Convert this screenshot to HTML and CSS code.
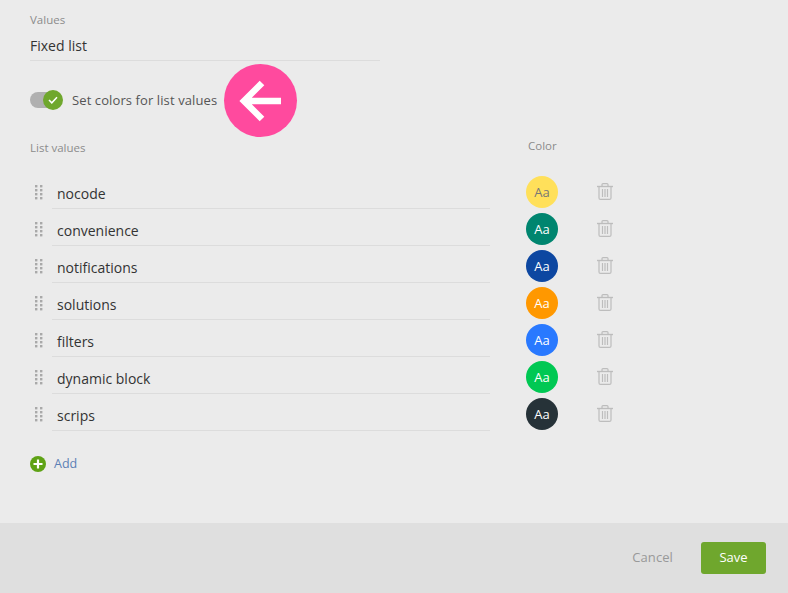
FILE: index.html
```html
<!DOCTYPE html>
<html lang="en">
<head>
    <meta charset="UTF-8">
    <meta name="viewport" content="width=device-width, initial-scale=1.0">
    <title>List values</title>
    <link rel="stylesheet" href="styles.css">
</head>
<body>
    <svg class="icon-defs" width="0" height="0">
        <symbol id="grip" viewBox="0 0 8 15">
            <g fill="#a9a9a9">
                <rect x="0" y="0" width="2.4" height="2.4"/><rect x="5" y="0" width="2.4" height="2.4"/>
                <rect x="0" y="4" width="2.4" height="2.4"/><rect x="5" y="4" width="2.4" height="2.4"/>
                <rect x="0" y="8" width="2.4" height="2.4"/><rect x="5" y="8" width="2.4" height="2.4"/>
                <rect x="0" y="12" width="2.4" height="2.4"/><rect x="5" y="12" width="2.4" height="2.4"/>
            </g>
        </symbol>
        <symbol id="trash" viewBox="0 0 16 17">
            <g fill="none" stroke="#bdbdbd" stroke-width="1.2">
                <path d="M0 3.5h16" stroke-width="1.4"/>
                <path d="M5 3.2V1.6q0-1 1-1h4q1 0 1 1v1.6"/>
                <path d="M2 3.5v11.4q0 1.5 1.5 1.5h9q1.500 0 1.500-1.500V3.500"/>
                <path d="M5.500 6v8M8 6v8M10.500 6v8"/>
            </g>
        </symbol>
    </svg>

    <main class="content">
        <div class="values-field">
            <div class="field-label">Values</div>
            <div class="values-input">Fixed list</div>
        </div>

        <div class="color-toggle">
            <div class="toggle">
                <span class="toggle-knob">
                    <svg width="10" height="8" viewBox="0 0 10 8"><path d="M1 4l2.800 2.800L9 1.200" fill="none" stroke="#fff" stroke-width="1.500"/></svg>
                </span>
            </div>
            <span class="toggle-label">Set colors for list values</span>
            <div class="arrow-badge">
                <svg width="44" height="42" viewBox="0 0 44 42"><path d="M42 21H6M23 3L5 21l18 18" fill="none" stroke="#fff" stroke-width="6.500"/></svg>
            </div>
        </div>

        <div class="list-head">
            <div class="list-head-name field-label">List values</div>
            <div class="field-label">Color</div>
        </div>

        <ul class="value-list">
            <li class="value-row">
                <svg class="grip"><use href="#grip"/></svg>
                <div class="value-name">nocode</div>
                <div class="swatch swatch-yellow">Aa</div>
                <svg class="trash"><use href="#trash"/></svg>
            </li>
            <li class="value-row">
                <svg class="grip"><use href="#grip"/></svg>
                <div class="value-name">convenience</div>
                <div class="swatch swatch-teal">Aa</div>
                <svg class="trash"><use href="#trash"/></svg>
            </li>
            <li class="value-row">
                <svg class="grip"><use href="#grip"/></svg>
                <div class="value-name">notifications</div>
                <div class="swatch swatch-navy">Aa</div>
                <svg class="trash"><use href="#trash"/></svg>
            </li>
            <li class="value-row">
                <svg class="grip"><use href="#grip"/></svg>
                <div class="value-name">solutions</div>
                <div class="swatch swatch-orange">Aa</div>
                <svg class="trash"><use href="#trash"/></svg>
            </li>
            <li class="value-row">
                <svg class="grip"><use href="#grip"/></svg>
                <div class="value-name">filters</div>
                <div class="swatch swatch-blue">Aa</div>
                <svg class="trash"><use href="#trash"/></svg>
            </li>
            <li class="value-row">
                <svg class="grip"><use href="#grip"/></svg>
                <div class="value-name">dynamic block</div>
                <div class="swatch swatch-green">Aa</div>
                <svg class="trash"><use href="#trash"/></svg>
            </li>
            <li class="value-row">
                <svg class="grip"><use href="#grip"/></svg>
                <div class="value-name">scrips</div>
                <div class="swatch swatch-dark">Aa</div>
                <svg class="trash"><use href="#trash"/></svg>
            </li>
        </ul>

        <div class="add-row">
            <svg width="16" height="16" viewBox="0 0 16 16"><circle cx="8" cy="8" r="8" fill="#5ea215"/><path d="M8 3.500v9M3.500 8h9" stroke="#fff" stroke-width="2.200"/></svg>
            <span class="add-label">Add</span>
        </div>
    </main>

    <footer class="footer">
        <span class="cancel-button">Cancel</span>
        <span class="save-button">Save</span>
    </footer>
</body>
</html>
```

FILE: styles.css
```css
body {
    display: flex;
    flex-direction: column;
    height: 593px;
    margin: 0;
    overflow: hidden;
    font-family: "Open Sans", "Noto Sans", sans-serif;
    font-size: 14px;
    background-color: #ebebeb;
    color: #333;
}

.icon-defs {
    position: absolute;
}

.content {
    flex: 1;
    padding: 12px 0 0 30px;
}

.field-label {
    font-size: 11.5px;
    line-height: 16px;
    color: #8c8c8c;
}

.values-input {
    width: 350px;
    height: 31px;
    line-height: 33px;
    margin-top: 1px;
    font-size: 14px;
    color: #333;
    border-bottom: 1px solid #dcdcdc;
}

.color-toggle {
    position: relative;
    display: flex;
    align-items: center;
    height: 20px;
    margin-top: 29px;
}

.toggle {
    position: relative;
    width: 32px;
    height: 16px;
    border-radius: 8px;
    background-color: #b0b0b0;
}

.toggle-knob {
    position: absolute;
    top: -2px;
    right: -1px;
    display: flex;
    justify-content: center;
    align-items: center;
    width: 20px;
    height: 20px;
    border-radius: 50%;
    background-color: #6fa72d;
}

.toggle-label {
    margin-left: 10px;
    font-size: 13px;
    letter-spacing: 0.1px;
    color: #555;
}

.arrow-badge {
    position: absolute;
    top: -26px;
    left: 194px;
    display: flex;
    justify-content: center;
    align-items: center;
    width: 73px;
    height: 73px;
    border-radius: 50%;
    background-color: #ff4a9e;
}

.list-head {
    display: flex;
    margin-top: 28px;
    align-items: flex-start;
}

.list-head-name {
    width: 498px;
    padding-top: 2px;
}

.value-list {
    list-style: none;
    margin: 21px 0 0;
    padding: 0;
}

.value-row {
    display: flex;
    align-items: flex-start;
    height: 37px;
}

.grip {
    flex: none;
    width: 8px;
    height: 15px;
    margin: 8px 0 0 5px;
}

.value-name {
    width: 433px;
    height: 31px;
    margin-left: 9px;
    padding-left: 5px;
    line-height: 33px;
    font-size: 14px;
    color: #333;
    border-bottom: 1px solid #dcdcdc;
}

.swatch {
    flex: none;
    width: 32px;
    height: 32px;
    margin: -1px 0 0 36px;
    border-radius: 50%;
    text-align: center;
    line-height: 32px;
    font-size: 13px;
    color: #fff;
}

.trash {
    flex: none;
    width: 16px;
    height: 17px;
    margin: 6px 0 0 39px;
}

.swatch-yellow {
    background-color: #ffe05a;
    color: #777;
}

.swatch-teal {
    background-color: #00856f;
}

.swatch-navy {
    background-color: #0d47a1;
}

.swatch-orange {
    background-color: #ff9800;
}

.swatch-blue {
    background-color: #2979ff;
}

.swatch-green {
    background-color: #00c853;
}

.swatch-dark {
    background-color: #263238;
}

.add-row {
    display: flex;
    align-items: center;
    margin-top: 19px;
}

.add-label {
    margin-left: 8px;
    font-size: 12.500px;
    color: #5b7fb5;
}

.footer {
    display: flex;
    justify-content: flex-end;
    align-items: center;
    flex: none;
    height: 70px;
    padding-right: 22px;
    background-color: #dfdfdf;
}

.cancel-button {
    margin-right: 28px;
    margin-bottom: 2px;
    font-size: 13px;
    letter-spacing: 0.1px;
    color: #999;
}

.save-button {
    width: 65px;
    height: 32px;
    line-height: 31px;
    text-align: center;
    border-radius: 3px;
    font-size: 13px;
    color: #fff;
    background-color: #6fa72d;
}
```
